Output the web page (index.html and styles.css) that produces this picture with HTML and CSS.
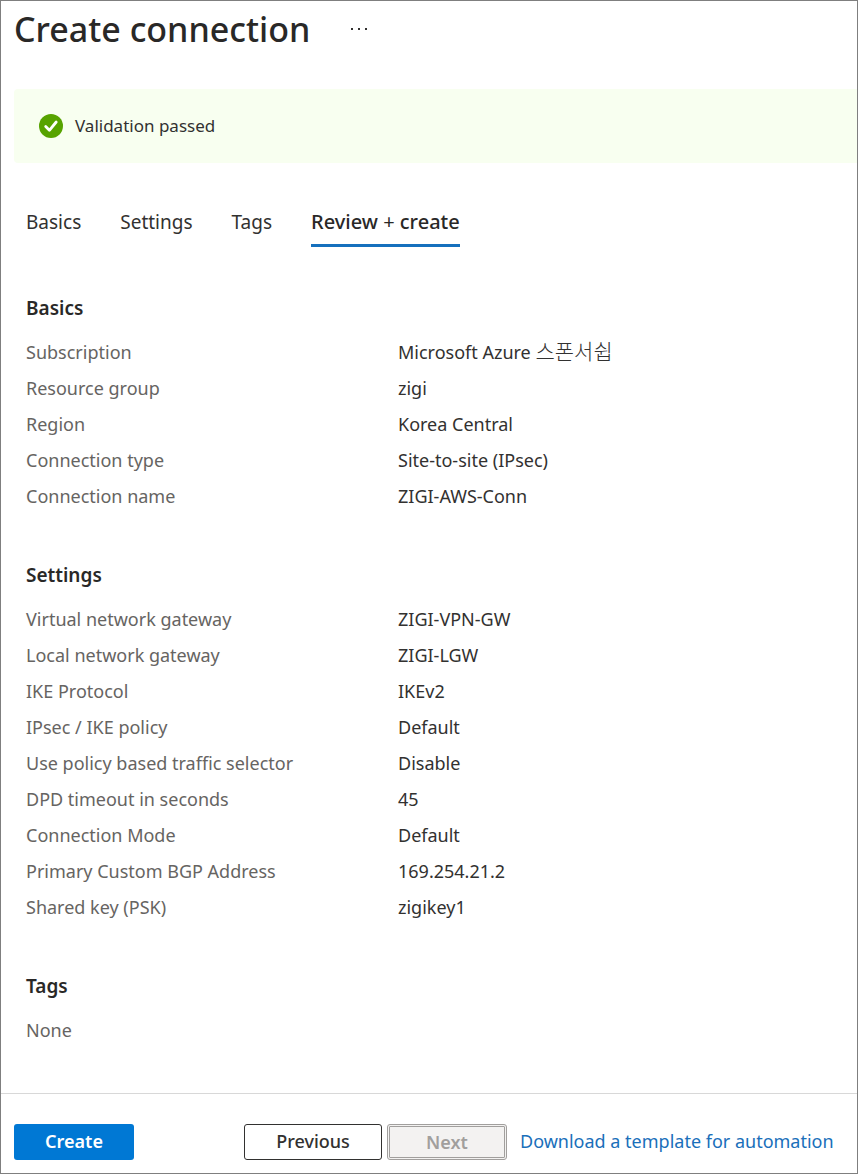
FILE: index.html
```html
<!DOCTYPE html>
<html lang="en">
<head>
    <meta charset="UTF-8">
    <meta name="viewport" content="width=device-width, initial-scale=1.0">
    <title>Create connection</title>
    <link rel="stylesheet" href="styles.css">
</head>
<body>
    <header class="page-header">
        <h1>Create connection</h1>
        <button type="button" class="more-btn" aria-label="More actions">
            <svg width="18" height="4" viewBox="0 0 18 4" fill="#323130">
                <rect x="1" y="1" width="2" height="2"/>
                <rect x="8" y="1" width="2" height="2"/>
                <rect x="15" y="1" width="2" height="2"/>
            </svg>
        </button>
    </header>

    <div class="banner" role="status">
        <svg class="banner-icon" width="24" height="24" viewBox="0 0 24 24">
            <circle cx="12" cy="12" r="12" fill="#57a300"/>
            <path d="M6.7 12.6l3.7 3.7 6.8-8.3" fill="none" stroke="#fff" stroke-width="2.8" stroke-linecap="round" stroke-linejoin="round"/>
        </svg>
        <span>Validation passed</span>
    </div>

    <nav class="tabs" role="tablist">
        <button type="button" class="tab" role="tab">Basics</button>
        <button type="button" class="tab" role="tab">Settings</button>
        <button type="button" class="tab" role="tab">Tags</button>
        <button type="button" class="tab active" role="tab" aria-selected="true">Review <span class="plus">+</span> create</button>
    </nav>

    <main class="summary">
        <section>
            <h2>Basics</h2>
            <dl class="details">
                <dt>Subscription</dt>
                <dd>Microsoft Azure <span class="korean" lang="ko">스폰서쉽</span></dd>
                <dt>Resource group</dt>
                <dd>zigi</dd>
                <dt>Region</dt>
                <dd>Korea Central</dd>
                <dt>Connection type</dt>
                <dd>Site-to-site (IPsec)</dd>
                <dt>Connection name</dt>
                <dd>ZIGI-AWS-Conn</dd>
            </dl>
        </section>
        <section>
            <h2>Settings</h2>
            <dl class="details">
                <dt>Virtual network gateway</dt>
                <dd>ZIGI-VPN-GW</dd>
                <dt>Local network gateway</dt>
                <dd>ZIGI-LGW</dd>
                <dt>IKE Protocol</dt>
                <dd>IKEv2</dd>
                <dt>IPsec / IKE policy</dt>
                <dd>Default</dd>
                <dt>Use policy based traffic selector</dt>
                <dd>Disable</dd>
                <dt>DPD timeout in seconds</dt>
                <dd>45</dd>
                <dt>Connection Mode</dt>
                <dd>Default</dd>
                <dt>Primary Custom BGP Address</dt>
                <dd>169.254.21.2</dd>
                <dt>Shared key (PSK)</dt>
                <dd>zigikey1</dd>
            </dl>
        </section>
        <section>
            <h2>Tags</h2>
            <p class="empty">None</p>
        </section>
    </main>

    <footer class="actions">
        <button type="button" class="btn btn-primary">Create</button>
        <div class="actions-nav">
            <button type="button" class="btn btn-previous">Previous</button>
            <button type="button" class="btn btn-next" disabled>Next</button>
            <a href="#" class="download-link">Download a template for automation</a>
        </div>
    </footer>
</body>
</html>
```
FILE: styles.css
```css
:root {
    --text-color: #323130;
    --heading-color: #292827;
    --label-color: #666462;
    --primary-color: #0078d4;
    --link-color: #1a6fba;
    --frame-color: #7f7f7f;
}

* {
    box-sizing: border-box;
}

body {
    font-family: 'Noto Sans', 'Noto Sans CJK KR', sans-serif;
    font-size: 18px;
    line-height: 36px;
    color: var(--text-color);
    background-color: #fff;
    margin: 0;
    min-height: 100vh;
    display: flex;
    flex-direction: column;
    border: 1px solid var(--frame-color);
}

button {
    font-family: inherit;
    color: inherit;
    cursor: pointer;
}

.page-header {
    display: flex;
    align-items: center;
    gap: 32px;
    height: 56px;
    padding-left: 13px;
}

h1 {
    margin: 0;
    font-size: 34px;
    font-weight: 500;
    color: var(--heading-color);
}

.more-btn {
    display: flex;
    padding: 8px;
    border: none;
    background: none;
}

.banner {
    display: flex;
    align-items: center;
    gap: 12px;
    min-height: 74px;
    margin: 32px 0 44px 13px;
    padding: 0 25px;
    background-color: #f8fff0;
    border-radius: 4px 0 0 4px;
    font-size: 17px;
}

.tabs {
    display: flex;
    gap: 39px;
    padding: 0 25px;
}

.tab {
    height: 40px;
    padding: 0 0 7px;
    border: none;
    border-bottom: 3px solid transparent;
    background: none;
    font-size: 19px;
    line-height: 28px;
}

.tab.active {
    border-bottom-color: #1570bd;
    color: var(--heading-color);
    font-size: 20px;
    font-weight: 500;
}

.plus {
    font-weight: 400;
}

.summary {
    flex: 1;
    display: flex;
    flex-direction: column;
    gap: 47px;
    padding: 47px 25px 45px;
}

h2 {
    margin: 0 0 12px;
    font-size: 19px;
    line-height: 28px;
    font-weight: 600;
    color: var(--heading-color);
}

.details {
    display: grid;
    grid-template-columns: 372px 1fr;
    grid-auto-rows: 36px;
    margin: 0;
}

dt,
.empty {
    color: var(--label-color);
}

dd,
.empty {
    margin: 0;
}

.korean {
    font-family: 'Noto Sans CJK KR', sans-serif;
    font-size: 21px;
    font-weight: 300;
    line-height: 28px;
}

.actions {
    display: flex;
    flex-wrap: wrap;
    gap: 12px 110px;
    padding: 30px 13px 13px;
    border-top: 1px solid #d8d8d8;
}

.actions-nav {
    display: flex;
    align-items: center;
}

.btn {
    height: 36px;
    min-width: 120px;
    padding-bottom: 3px;
    border-radius: 3px;
    font-size: 18px;
    font-weight: 600;
    line-height: 28px;
}

.btn-primary {
    border: none;
    background-color: var(--primary-color);
    color: #fff;
}

.btn-previous {
    min-width: 138px;
    margin-right: 5px;
    border: 1px solid var(--text-color);
    background-color: #fff;
    font-weight: 500;
}

.btn-next {
    margin-right: 13px;
    border: 3px double #a19f9d;
    background-color: #f3f2f1;
    color: #a19f9d;
    cursor: default;
}

.download-link {
    padding-bottom: 2px;
    color: var(--link-color);
    line-height: 34px;
    text-decoration: none;
}

.download-link:hover {
    text-decoration: underline;
}
```
